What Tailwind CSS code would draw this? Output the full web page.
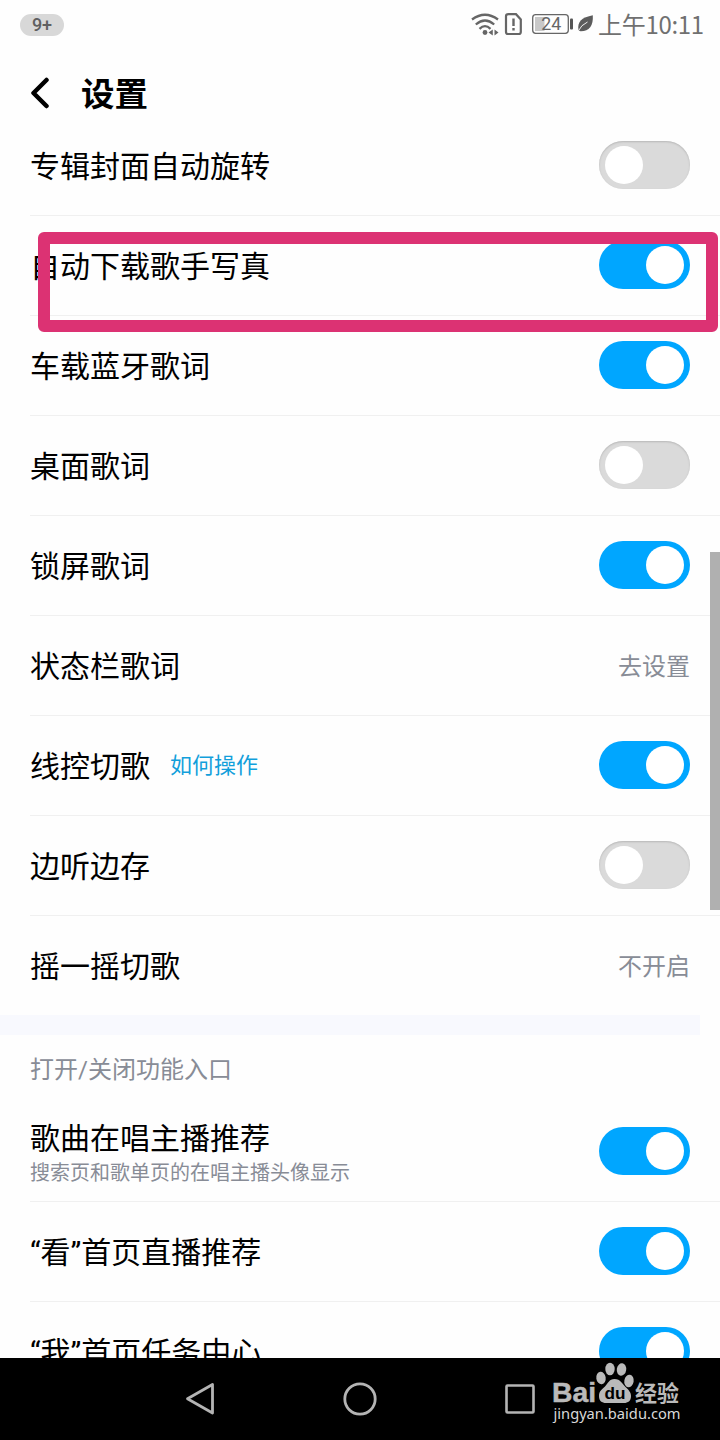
<!DOCTYPE html>
<html lang="zh-CN">
<head>
<meta charset="utf-8">
<title>设置</title>
<script src="https://cdn.jsdelivr.net/npm/@tailwindcss/browser@4"></script>
</head>
<body class="bg-white">
<div class="relative flex h-[1440px] w-[720px] flex-col overflow-hidden bg-[#fefefe] font-['Roboto','Noto_Sans_CJK_SC',sans-serif] text-black">

  <!-- Status bar -->
  <header class="flex h-12 shrink-0 items-center justify-between pr-4 pl-5 text-[#707070]">
    <span class="mt-0.5 flex h-[22px] w-11 items-center justify-center rounded-full bg-[#d8d8d8] text-[18px] leading-none font-medium text-[#606060]">9+</span>
    <div class="flex items-center">
      <svg class="mt-0.5 h-[26px] w-[124px]" viewBox="470 12 124 26" fill="none" stroke="#666">
        <g stroke-width="2.3">
          <path d="M472 19.500Q485 10 498 19.500"/>
          <path d="M475.800 24.500Q485 16.500 494.200 24.500"/>
          <path d="M479.500 28.800Q485 23.500 490.500 28.800"/>
        </g>
        <circle cx="485" cy="32.500" r="2.400" fill="#666" stroke="none"/>
        <path d="M492.800 29.500v6L488.500 32.500zM494.500 29.500v6L498.500 32.500z" fill="#666" stroke="none"/>
        <path d="M508.500 14.200H516L520.800 19.500V32q0 2-2 2H508q-2 0-2-2V16.200q0-2 2.500-2z" stroke-width="2.200"/>
        <path d="M513.500 18.500v7.500M513.500 28v2.500" stroke-width="2.400"/>
        <rect x="532.700" y="14.700" width="35.600" height="18.600" rx="3" stroke-width="1.300"/>
        <rect x="535" y="17" width="9.500" height="14" fill="#c8c8c8" stroke="none"/>
        <rect x="570" y="18.500" width="3" height="11" rx="1" fill="#555" stroke="none"/>
        <text x="541.300" y="30.300" font-size="18" textLength="20" lengthAdjust="spacingAndGlyphs" fill="#666" stroke="none">24</text>
        <path d="M592.800 15.200C593.500 26 589 31.500 580.500 31.300L578.500 30.500C577 21 582 17.500 592.800 15.200z" fill="#5c5c5c" stroke="none"/>
        <path d="M578.300 31Q581 25 587.500 22" stroke="#fefefe" stroke-width=".9"/>
      </svg>
      <span class="ml-1 w-[106px] font-['Noto_Sans_CJK_SC',sans-serif] text-[24px] leading-[48px] tracking-[-0.3px] whitespace-nowrap">上午10:11</span>
    </div>
  </header>

  <!-- Title bar -->
  <div class="flex h-[68px] shrink-0 items-center pt-[22px] pl-[30px]">
    <svg class="h-8 w-5" viewBox="0 0 20 32" fill="none" stroke="#000" stroke-width="4.500" stroke-linecap="round" stroke-linejoin="round"><path d="M16.500 3L3.500 16L16.500 29"/></svg>
    <h1 class="ml-[31px] pt-1 text-[33.500px] leading-none font-bold">设置</h1>
  </div>

  <main class="flex h-[1242px] shrink-0 flex-col overflow-hidden">
    <div class="ml-[30px] flex h-[100px] shrink-0 items-center justify-between border-b border-[#f0f0f0] pr-[30px] pb-px text-[30px]">
      <span class="pt-0.5">专辑封面自动旋转</span>
      <i class="flex h-12 w-[91px] items-center rounded-full bg-[#dadada] px-1.5 shadow-[inset_0_1px_2px_#b8b8b8]"><b class="size-[38px] rounded-full bg-white"></b></i>
    </div>
    <div class="ml-[30px] flex h-[100px] shrink-0 items-center justify-between border-b border-[#f0f0f0] pr-[30px] pb-px text-[30px]">
      <span class="pt-0.5">自动下载歌手写真</span>
      <i class="flex h-12 w-[91px] items-center justify-end rounded-full bg-[#00a6ff] px-1.5"><b class="size-[38px] rounded-full bg-white"></b></i>
    </div>
    <div class="ml-[30px] flex h-[100px] shrink-0 items-center justify-between border-b border-[#f0f0f0] pr-[30px] pb-px text-[30px]">
      <span class="pt-0.5">车载蓝牙歌词</span>
      <i class="flex h-12 w-[91px] items-center justify-end rounded-full bg-[#00a6ff] px-1.5"><b class="size-[38px] rounded-full bg-white"></b></i>
    </div>
    <div class="ml-[30px] flex h-[100px] shrink-0 items-center justify-between border-b border-[#f0f0f0] pr-[30px] pb-px text-[30px]">
      <span class="pt-0.5">桌面歌词</span>
      <i class="flex h-12 w-[91px] items-center rounded-full bg-[#dadada] px-1.5 shadow-[inset_0_1px_2px_#b8b8b8]"><b class="size-[38px] rounded-full bg-white"></b></i>
    </div>
    <div class="ml-[30px] flex h-[100px] shrink-0 items-center justify-between border-b border-[#f0f0f0] pr-[30px] pb-px text-[30px]">
      <span class="pt-0.5">锁屏歌词</span>
      <i class="flex h-12 w-[91px] items-center justify-end rounded-full bg-[#00a6ff] px-1.5"><b class="size-[38px] rounded-full bg-white"></b></i>
    </div>
    <div class="ml-[30px] flex h-[100px] shrink-0 items-center justify-between border-b border-[#f0f0f0] pr-[30px] pb-px text-[30px]">
      <span class="pt-0.5">状态栏歌词</span>
      <span class="pt-[3px] text-[24px] text-[#888c96]">去设置</span>
    </div>
    <div class="ml-[30px] flex h-[100px] shrink-0 items-center justify-between border-b border-[#f0f0f0] pr-[30px] pb-px text-[30px]">
      <span class="flex items-center gap-5 pt-0.5">线控切歌<a class="pb-px text-[22px] text-[#129fdb]">如何操作</a></span>
      <i class="flex h-12 w-[91px] items-center justify-end rounded-full bg-[#00a6ff] px-1.5"><b class="size-[38px] rounded-full bg-white"></b></i>
    </div>
    <div class="ml-[30px] flex h-[100px] shrink-0 items-center justify-between border-b border-[#f0f0f0] pr-[30px] pb-px text-[30px]">
      <span class="pt-0.5">边听边存</span>
      <i class="flex h-12 w-[91px] items-center rounded-full bg-[#dadada] px-1.5 shadow-[inset_0_1px_2px_#b8b8b8]"><b class="size-[38px] rounded-full bg-white"></b></i>
    </div>
    <div class="ml-[30px] flex h-[99px] shrink-0 items-center justify-between pr-[30px] text-[30px]">
      <span class="pt-px">摇一摇切歌</span>
      <span class="pt-0.5 text-[24px] text-[#888c96]">不开启</span>
    </div>
    <div class="h-5 w-[700px] shrink-0 bg-[#f8f9fe]"></div>
    <h2 class="ml-[30px] flex h-[67px] shrink-0 items-center pt-0.5 text-[24px] text-[#888c96]">打开/关闭功能入口</h2>
    <div class="ml-[30px] flex h-[100px] shrink-0 items-center justify-between border-b border-[#f0f0f0] pr-[30px] pb-px text-[30px]">
      <div class="flex flex-col pt-1.5">
        <span class="leading-[38px]">歌曲在唱主播推荐</span>
        <span class="text-[20px] leading-[30px] text-[#888c96]">搜索页和歌单页的在唱主播头像显示</span>
      </div>
      <i class="flex h-12 w-[91px] items-center justify-end rounded-full bg-[#00a6ff] px-1.5"><b class="size-[38px] rounded-full bg-white"></b></i>
    </div>
    <div class="ml-[30px] flex h-[100px] shrink-0 items-center justify-between border-b border-[#f0f0f0] pr-[30px] pb-px text-[30px]">
      <span class="pt-0.5">“看”首页直播推荐</span>
      <i class="flex h-12 w-[91px] items-center justify-end rounded-full bg-[#00a6ff] px-1.5"><b class="size-[38px] rounded-full bg-white"></b></i>
    </div>
    <div class="ml-[30px] flex h-[100px] shrink-0 items-center justify-between pr-[30px] pb-0.5 text-[30px]">
      <span class="pt-0.5">“我”首页任务中心</span>
      <i class="flex h-12 w-[91px] items-center justify-end rounded-full bg-[#00a6ff] px-1.5"><b class="size-[38px] rounded-full bg-white"></b></i>
    </div>
  </main>

  <!-- System navigation -->
  <nav class="flex h-[82px] shrink-0 items-center gap-[126px] bg-black pl-[183px]">
    <svg class="size-[34px]" viewBox="0 0 34 34" fill="none" stroke="#b4b4b4" stroke-width="2.800" stroke-linejoin="round"><path d="M29.500 2.500V31L4.500 16.800z"/></svg>
    <svg class="size-[34px]" viewBox="0 0 34 34" fill="none" stroke="#b4b4b4" stroke-width="2.800"><circle cx="17" cy="17" r="15.200"/></svg>
    <svg class="size-[34px]" viewBox="0 0 34 34" fill="none" stroke="#b4b4b4" stroke-width="2.600"><rect x="3.500" y="3.500" width="27" height="27" rx="1"/></svg>
  </nav>

  <!-- Highlight frame -->
  <div class="absolute top-[232px] left-[38px] h-[100px] w-[680px] rounded-md border-[12px] border-[#dc3273]"></div>
  <!-- Scrollbar -->
  <div class="absolute top-[552px] right-0 h-[358px] w-2.5 bg-[#b0b0b0]"></div>
  <!-- Site watermark -->
  <svg class="absolute top-[1358px] left-[540px] h-[72px] w-[150px]" viewBox="540 1358 150 72" fill="#bababa">
    <text x="552" y="1402" font-family="Liberation Sans" font-weight="bold" font-size="28.500" textLength="44" lengthAdjust="spacingAndGlyphs" stroke="#bababa" stroke-width=".5">Bai</text>
    <ellipse cx="601" cy="1378" rx="4.700" ry="6.300" transform="rotate(-8 601 1378)"/>
    <ellipse cx="610" cy="1369" rx="4.700" ry="6.300"/>
    <ellipse cx="621.500" cy="1369.500" rx="4.700" ry="6.300" transform="rotate(8 621.500 1369.500)"/>
    <ellipse cx="629" cy="1381" rx="4.700" ry="6.300" transform="rotate(10 629 1381)"/>
    <path d="M614.500 1379c6 0 8 5 11 8s5.500 5 5.500 9c0 5-3 7-7 7h-18c-4 0-7-2-7-7s3-6.500 6-9.500 4-7.500 9.500-7.500z"/>
    <text x="604.500" y="1398.500" font-family="Liberation Sans" font-weight="bold" font-size="17" textLength="21" lengthAdjust="spacingAndGlyphs" fill="#000">du</text>
    <text x="635" y="1400.500" font-family="Noto Sans CJK SC" font-weight="bold" font-size="22" textLength="44" lengthAdjust="spacingAndGlyphs">经验</text>
    <text x="553.500" y="1419" font-family="Noto Sans" font-size="15" textLength="127" lengthAdjust="spacingAndGlyphs" fill="#d8d8d8">jingyan.baidu.com</text>
  </svg>
</div>
</body>
</html>
